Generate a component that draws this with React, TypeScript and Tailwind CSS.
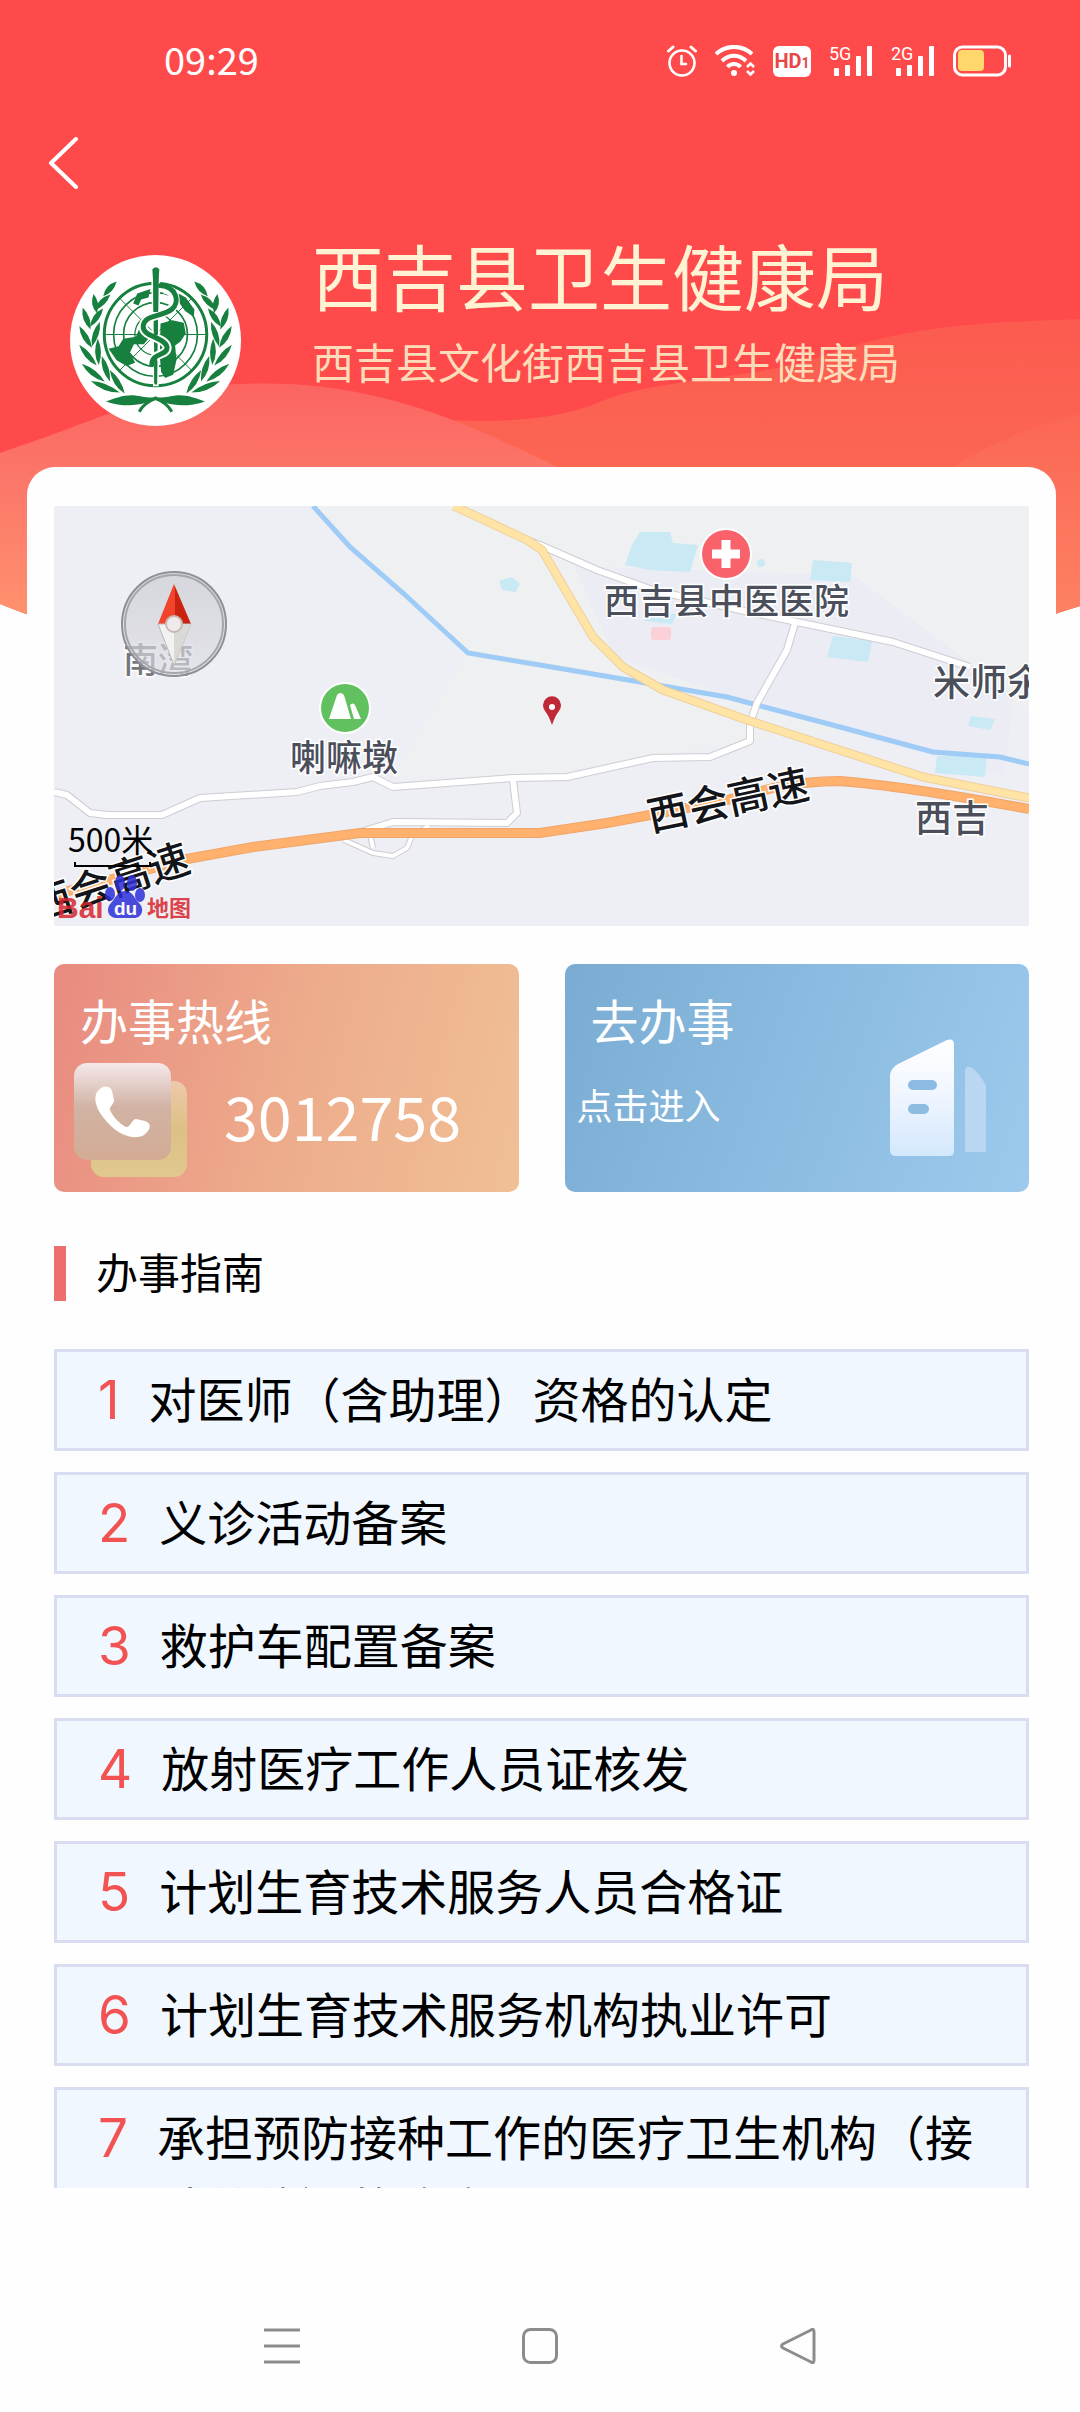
import React from 'react';

interface GuideItem {
  id: number;
  title: string;
}

const guideItems: GuideItem[] = [
  { id: 1, title: '对医师（含助理）资格的认定' },
  { id: 2, title: '义诊活动备案' },
  { id: 3, title: '救护车配置备案' },
  { id: 4, title: '放射医疗工作人员证核发' },
  { id: 5, title: '计划生育技术服务人员合格证' },
  { id: 6, title: '计划生育技术服务机构执业许可' },
  { id: 7, title: '承担预防接种工作的医疗卫生机构（接种单位）的确定' },
];

const HeaderBackground = () => (
  <svg
    className="absolute inset-x-0 top-0 w-full h-[660px]"
    viewBox="0 0 1080 660"
    preserveAspectRatio="none"
    aria-hidden="true"
  >
    <defs>
      <clipPath id="bowl">
        <path d="M0 0H1080V606Q1060 612 1040 619Q540 690 40 619Q20 612 0 604Z" />
      </clipPath>
      <linearGradient id="hillLeft" x1="0" y1="380" x2="0" y2="620" gradientUnits="userSpaceOnUse">
        <stop offset="0" stopColor="#fc6461" />
        <stop offset="0.4" stopColor="#fc7669" />
        <stop offset="1" stopColor="#ff926e" />
      </linearGradient>
      <linearGradient id="hillRight" x1="0" y1="320" x2="0" y2="620" gradientUnits="userSpaceOnUse">
        <stop offset="0" stopColor="#fc5b4f" />
        <stop offset="1" stopColor="#fb7156" />
      </linearGradient>
      <linearGradient id="hillFront" x1="0" y1="410" x2="0" y2="620" gradientUnits="userSpaceOnUse">
        <stop offset="0" stopColor="#fb6653" />
        <stop offset="1" stopColor="#fd8264" />
      </linearGradient>
    </defs>
    <g clipPath="url(#bowl)">
      <rect width="1080" height="660" fill="#ff4a4b" />
      <path d="M440 420C500 422 550 422 600 402C660 376 760 382 840 350C920 324 1000 322 1080 319V660H440Z" fill="url(#hillRight)" />
      <path d="M930 480C980 450 1020 428 1080 414V660H930Z" fill="url(#hillFront)" />
      <path d="M0 453C50 436 80 424 130 406C190 384 240 382 290 384C400 390 480 430 560 468L620 660H0Z" fill="url(#hillLeft)" />
    </g>
  </svg>
);

const AlarmIcon = () => (
  <svg className="w-[30px] h-[32px]" viewBox="0 0 30 32" fill="none" stroke="white" strokeWidth="2.6" strokeLinecap="round">
    <circle cx="15" cy="18" r="12.5" />
    <path d="M14.5 11V19H19" />
    <path d="M1.5 6L6 2M28.5 6L24 2" strokeWidth="3" />
  </svg>
);

const WifiIcon = () => (
  <svg className="w-[40px] h-[32px]" viewBox="0 0 40 32" fill="none" stroke="white" strokeWidth="4">
    <path d="M1 9C11 -0.5 27 -0.5 37 9" />
    <path d="M7 16C14 9 24 9 31 16" />
    <path d="M12.5 22C16 18 22 18 25.5 22" />
    <circle cx="19" cy="28" r="3" fill="white" stroke="none" />
    <path d="M32 22L35.500 18.500L39 22M32 26L35.500 29.500L39 26" strokeWidth="2.5" />
  </svg>
);

const SignalIcon = ({ label }: { label: string }) => (
  <svg className="w-[44px] h-[32px] overflow-visible" viewBox="0 0 44 32" fill="white">
    <text x="0" y="15" fontSize="18" fontFamily="Roboto, sans-serif">{label}</text>
    <rect x="5" y="23" width="5" height="8" rx="1" />
    <rect x="16" y="20" width="5" height="11" rx="1" />
    <rect x="27" y="11" width="5" height="20" rx="1" />
    <rect x="38" y="1" width="5" height="30" rx="1" />
  </svg>
);

const BatteryIcon = () => (
  <svg className="w-[59px] h-[32px]" viewBox="0 0 59 32" fill="none">
    <rect x="1.500" y="2" width="51" height="28" rx="8" stroke="white" strokeWidth="3" />
    <rect x="5" y="5" width="26" height="21" rx="4" fill="#ffd76b" />
    <path d="M56.500 11V21" stroke="white" strokeWidth="3" strokeLinecap="round" />
  </svg>
);

const StatusBar = () => (
  <div className="flex items-center justify-between h-[122px] pl-[164px] pr-[68px] text-white">
    <span className="pb-1 text-[38px] leading-[44px]">09:29</span>
    <div className="flex items-center gap-[18px]">
      <AlarmIcon />
      <WifiIcon />
      <span className="flex items-baseline justify-center w-[38px] h-[31px] rounded-[6px] bg-white text-[#e8474a] font-['Roboto'] font-bold text-[20px] leading-[31px]">
        HD<span className="text-[14px]">1</span>
      </span>
      <SignalIcon label="5G" />
      <SignalIcon label="2G" />
      <BatteryIcon />
    </div>
  </div>
);

// [x, y, angle, length] of every leaf on the left branch; the right one is its mirror
const leaves: [number, number, number, number][] = [
  [150, 146, -48, 60],
  [106, 190, -100, 58],
  [128, 186, -45, 66],
  [80, 235, -110, 70],
  [110, 232, -55, 68],
  [77, 290, -120, 76],
  [108, 282, -72, 78],
  [84, 345, -130, 82],
  [115, 335, -92, 80],
  [100, 398, -142, 88],
  [138, 386, -108, 80],
  [136, 440, -158, 94],
  [172, 425, -122, 84],
];

const Branch = () => (
  <g>
    {leaves.map(([x, y, angle, length]) => (
      <path
        key={`${x}-${y}`}
        transform={`translate(${x} ${y}) rotate(${angle})`}
        d={`M${-length / 2} 0Q0 -19 ${length / 2} 0Q0 16 ${-length / 2} 0Z`}
      />
    ))}
    <path d="M138 484C170 474 190 464 225 466C250 468 270 478 290 468C262 498 196 504 138 484Z" />
    <path d="M238 515C250 492 268 482 290 474" fill="none" stroke="#17803f" strokeWidth="9" />
  </g>
);

const HealthEmblem = () => (
  <svg className="w-full h-full" viewBox="30 44 514 514" fill="#17803f" role="img" aria-label="卫生健康局">
    <g fill="none" stroke="#17803f">
      <circle cx="287" cy="283" r="154" strokeWidth="9" />
      <circle cx="287" cy="283" r="126" strokeWidth="5" />
      <circle cx="287" cy="283" r="96" strokeWidth="5" />
      <circle cx="287" cy="283" r="62" strokeWidth="4" />
      <path d="M133 283H441M180 175L395 390M395 175L180 390" strokeWidth="3" />
    </g>
    <path d="M220 190L232 160L272 146L266 172L244 178L236 196Z" />
    <path d="M356 160L378 172L404 208L402 230L376 212L360 190Z" />
    <path d="M146 326L176 318L190 296L228 290L240 262L262 254L270 290L252 312L222 312L210 338L226 368L200 378L170 360Z" />
    <path d="M302 250L338 240L372 248L378 280L362 304L346 316L350 360L340 404L316 414L304 396L300 350Z" />
    <Branch />
    <g transform="translate(574 0) scale(-1 1)">
      <Branch />
    </g>
    <path d="M275 86Q288 70 301 86L299 120L294 436H282L277 120Z" stroke="white" strokeWidth="5" />
    <path d="M312 146C346 150 356 184 336 204C308 230 254 222 250 258C248 292 318 290 322 322C322 348 276 336 276 374" fill="none" stroke="white" strokeWidth="27" />
    <path d="M302 136C350 140 362 186 336 207C308 230 254 222 250 258C248 292 318 290 322 322C322 348 276 336 276 374" fill="none" stroke="#17803f" strokeWidth="15" strokeLinecap="round" />
    <path d="M281 100H295V215H281ZM282 250H294V285H282ZM283 345H292V430H283Z" />
  </svg>
);

const AgencyHeader = () => (
  <div className="flex items-start pt-[30px] pb-[41px] px-[70px] gap-[71px]">
    <div className="shrink-0 mt-[21px] w-[171px] h-[171px] rounded-full bg-white overflow-hidden">
      <HealthEmblem />
    </div>
    <div className="flex flex-col gap-[17px] whitespace-nowrap">
      <h1 className="text-[72px] leading-[80px] text-[#fff3d3]">西吉县卫生健康局</h1>
      <p className="text-[42px] leading-[60px] text-[#fddcb9]">西吉县文化街西吉县卫生健康局</p>
    </div>
  </div>
);

const AreaMap = () => (
  <svg
    className="block w-full h-[420px] bg-[#eeeff4]"
    viewBox="0 0 975 420"
    preserveAspectRatio="xMidYMid slice"
    fontFamily="'Noto Sans CJK SC', sans-serif"
  >
    <defs>
      <linearGradient id="needle" x1="0" x2="1">
        <stop offset="0.5" stopColor="#f0442c" />
        <stop offset="0.5" stopColor="#c9230f" />
      </linearGradient>
      <linearGradient id="dial" x1="0" x2="0" y1="0" y2="1">
        <stop offset="0" stopColor="#c9cad0" />
        <stop offset="1" stopColor="#dedee5" />
      </linearGradient>
    </defs>
    <path d="M259 0H975V200L696 235L459 272L340 270L414 147Z" fill="#eef0f1" />
    <path d="M520 60L800 70L960 190L950 270L700 200L560 150Z" fill="#ebecf4" />

    {/* built-up areas */}
    <g fill="#c9e9f5">
      <path d="M586 26H616L619 37L644 39L636 66L596 64L571 59L578 39Z" />
      <path d="M759 54L798 57L796 76L756 74Z" />
      <path d="M779 130L818 135L814 156L773 151Z" />
      <path d="M883 250H933L931 271L881 267Z" />
      <path d="M917 210L941 213L936 224L914 220Z" />
      <path d="M445 75L458 71L466 78L462 86L448 84Z" />
      <path d="M592 108L622 108L618 118L590 115Z" />
      <circle cx="707" cy="57" r="4" />
    </g>
    <rect x="597" y="121" width="20" height="13" rx="3" fill="#fbd0d9" />

    <path d="M259 0L296 41L349 87L414 147L486 159L586 176L673 191L786 221L879 246L946 251L975 258" fill="none" stroke="#9fcbf7" strokeWidth="5" />

    {/* minor roads: casing under the white line */}
    {[
      { color: '#cdcdd3', width: 8 },
      { color: '#ffffff', width: 6 },
    ].map((line) => (
      <g key={line.color} fill="none" stroke={line.color} strokeWidth={line.width} strokeLinejoin="round">
        <path d="M473 34L486 39L543 64L599 84L686 104L743 116L839 136L916 161" />
        <path d="M741 117L733 144L703 197L696 217V235L656 251L599 252L513 271L459 272L339 281L319 271L299 276L266 280L243 286L146 292L108 309L53 309L36 307L13 289L0 286" />
        <path d="M459 274L463 307L453 317L339 316L300 328" />
        <path d="M290 334L319 347L339 350L353 342L358 330L375 320M316 328L319 342" strokeWidth={line.width - 2} />
      </g>
    ))}

    <path d="M400 0L473 34L488 44L519 97L539 131L569 161L609 184L693 214L776 241L869 271L975 292" fill="none" stroke="#efcf9b" strokeWidth="9" strokeLinejoin="round" />
    <path d="M400 0L473 34L488 44L519 97L539 131L569 161L609 184L693 214L776 241L869 271L975 292" fill="none" stroke="#ffe4a5" strokeWidth="7" strokeLinejoin="round" />
    <path d="M0 389L133 353L199 341L306 327H486L553 317L596 309L673 294L719 282Q753 275 786 275Q850 280 975 303" fill="none" stroke="#f0a468" strokeWidth="10" />
    <path d="M0 389L133 353L199 341L306 327H486L553 317L596 309L673 294L719 282Q753 275 786 275Q850 280 975 303" fill="none" stroke="#ffb16d" strokeWidth="8" />

    {/* place names */}
    <g fill="#4b4f5c" stroke="white" strokeWidth="3" paintOrder="stroke" fontWeight="500">
      <text x="69" y="167" fontSize="35" fill="#75777f">南湾</text>
      <text x="236" y="265" fontSize="36">喇嘛墩</text>
      <text x="550" y="108" fontSize="35">西吉县中医医院</text>
      <text x="879" y="190" fontSize="37">米师氽</text>
      <text x="861" y="326" fontSize="37">西吉</text>
    </g>
    <g fill="#14151a" stroke="white" strokeWidth="3" paintOrder="stroke" fontWeight="500" fontSize="41" textAnchor="middle">
      <text transform="translate(674 294) rotate(-12)" y="15">西会高速</text>
      <text transform="translate(56 376) rotate(-18)" y="15">西会高速</text>
    </g>

    {/* compass */}
    <circle cx="120" cy="118" r="52" fill="url(#dial)" fillOpacity="0.65" stroke="#8f9096" strokeWidth="2" />
    <circle cx="120" cy="118" r="49" fill="none" stroke="#a5a6ab" strokeWidth="2" />
    <path d="M120 78L137 118H104Z" fill="url(#needle)" />
    <path d="M104 118H137L120 159Z" fill="#f2f2f0" stroke="#b9b9b9" />
    <path d="M120 118H137L120 159Z" fill="#d9d9d6" />
    <circle cx="120" cy="118" r="8" fill="#efebea" stroke="#c9b9b5" strokeWidth="2" />

    {/* park and hospital markers */}
    <circle cx="291" cy="202" r="26" fill="white" />
    <circle cx="291" cy="202" r="24" fill="#62c15f" />
    <path d="M275 213L283 189Q286 185 290 189L297 213Z" fill="white" />
    <path d="M296 199Q299 196 301 199L307 213H300Z" fill="white" />
    <circle cx="672" cy="48" r="26" fill="white" />
    <circle cx="672" cy="48" r="24" fill="#f9616b" />
    <path d="M672 34V62M658 48H686" stroke="white" strokeWidth="9" />

    <path d="M498 219Q495 210 491 205A9 9 0 1 1 505 205Q501 210 498 219Z" fill="#bf2836" />
    <circle cx="498" cy="201" r="3" fill="white" />

    {/* scale */}
    <text x="14" y="346" fontSize="32" fill="#000">500米</text>
    <path d="M21 356V360H96V356" fill="none" stroke="#000" strokeWidth="2" />

    {/* map provider mark */}
    <g opacity="0.85">
      <text x="3" y="412" fontSize="30" fontWeight="700" fontFamily="'Liberation Sans', Arial, sans-serif" fill="#d9252c">Bai</text>
      <g fill="#2d2fd8">
        <ellipse cx="56" cy="388" rx="5" ry="7" />
        <ellipse cx="66" cy="377" rx="5" ry="8" />
        <ellipse cx="78" cy="377" rx="5" ry="8" />
        <ellipse cx="86" cy="389" rx="5" ry="7" />
        <path d="M71 385C79 385 80 392 85 397C91 403 88 412 80 412H63C53 412 52 402 57 397C62 392 63 385 71 385Z" />
      </g>
      <text x="60" y="409" fontSize="19" fontWeight="700" fontFamily="'Liberation Sans', Arial, sans-serif" fill="white">du</text>
      <text x="93" y="410" fontSize="22" fontWeight="700" fill="#d9252c">地图</text>
    </g>
  </svg>
);

const PhoneTile = () => (
  <svg className="w-[114px] h-[114px]" viewBox="0 0 114 114" aria-hidden="true">
    <defs>
      <linearGradient id="tileBack" x1="0" x2="0" y1="0" y2="1">
        <stop offset="0" stopColor="#efc9ac" />
        <stop offset="0.500" stopColor="#dcc185" />
        <stop offset="1" stopColor="#e0c88e" />
      </linearGradient>
      <linearGradient id="tileFront" x1="0" x2="0" y1="0" y2="1">
        <stop offset="0" stopColor="#f5e9ea" />
        <stop offset="0.450" stopColor="#d1b3a4" />
        <stop offset="1" stopColor="#d3ab94" />
      </linearGradient>
    </defs>
    <rect x="17" y="18" width="96" height="96" rx="13" fill="url(#tileBack)" />
    <rect width="97" height="97" rx="13" fill="url(#tileFront)" />
    <path d="M22 31C26 22 36 21 38 28L40 37C40 42 35 43 36 47C39 54 45 60 52 64C56 65 57 57 62 56L71 58C79 61 76 67 70 72C62 77 47 73 37 63C26 52 19 41 22 31Z" fill="white" />
  </svg>
);

const BuildingIcon = () => (
  <svg className="w-[97px] h-[118px]" viewBox="0 0 97 118" aria-hidden="true">
    <defs>
      <linearGradient id="tower" x1="0" x2="0" y1="0" y2="1">
        <stop offset="0" stopColor="#ffffff" />
        <stop offset="0.450" stopColor="#f1f6ff" />
        <stop offset="1" stopColor="#d3e8fd" />
      </linearGradient>
    </defs>
    <path d="M0 36Q1 29 8 25L57 1Q64 -1 64 6V112Q64 117 59 117H6Q0 117 0 111Z" fill="url(#tower)" />
    <rect x="18" y="41" width="29" height="10" rx="5" fill="#8dbbe2" />
    <rect x="18" y="65" width="21" height="10" rx="5" fill="#8dbbe2" />
    <path d="M75 113V33Q75 27 80 28Q86 30 96 46V113Z" fill="#b9d6f2" />
  </svg>
);

const NavButton = ({ label, children }: { label: string; children: React.ReactNode }) => (
  <button type="button" aria-label={label} className="flex-1 flex justify-center">
    <svg className="w-[36px] h-[36px]" viewBox="0 0 36 36" fill="none" stroke="#8c8c8c" strokeWidth="3" strokeLinejoin="round">
      {children}
    </svg>
  </button>
);

const App: React.FC = () => {
  return (
    <div className="relative flex flex-col h-screen overflow-hidden bg-[#fefefe] font-['Noto_Sans_CJK_SC',sans-serif] text-black">
      <HeaderBackground />

      <header className="relative">
        <StatusBar />
        <div className="flex items-center h-[82px] pl-[47px]">
          <button type="button" aria-label="返回">
            <svg className="w-[32px] h-[52px]" viewBox="0 0 32 52" fill="none" stroke="white" strokeWidth="4" strokeLinecap="round" strokeLinejoin="round">
              <path d="M29 2L4 26L29 50" />
            </svg>
          </button>
        </div>
        <AgencyHeader />
      </header>

      <main className="relative flex-1 min-h-0 flex flex-col ml-[27px] mr-[24px] px-[27px] pt-[39px] rounded-t-[28px] bg-[#fefefe]">
        <div className="shrink-0">
          <AreaMap />
        </div>

        {/* Shortcuts */}
        <div className="shrink-0 grid grid-cols-2 gap-[46px] mt-[38px] text-white">
          <a href="tel:3012758" className="block h-[228px] rounded-[10px] bg-linear-[105deg] from-[#e98a80] via-[#edab8b] to-[#f0c095] pt-[22px] px-[20px]">
            <h2 className="pl-[6px] text-[48px] leading-[66px]">办事热线</h2>
            <div className="flex items-center gap-[36px] mt-[11px]">
              <PhoneTile />
              <span className="pb-[10px] text-[61px] leading-[72px]">3012758</span>
            </div>
          </a>
          <a href="#services" className="flex items-center justify-between h-[228px] rounded-[10px] bg-linear-[110deg] from-[#7aacd3] to-[#9ccaed] pl-[12px] pr-[42px]">
            <div className="flex flex-col gap-[25px] self-start pt-[22px]">
              <h2 className="pl-[14px] text-[48px] leading-[66px]">去办事</h2>
              <p className="text-[36px] leading-[54px]">点击进入</p>
            </div>
            <div className="mt-[40px]">
              <BuildingIcon />
            </div>
          </a>
        </div>

        <div className="shrink-0 flex items-start gap-[30px] mt-[54px]">
          <span className="w-[12px] h-[55px] bg-[#ed6e6e]"></span>
          <h2 className="text-[42px] leading-[50px]">办事指南</h2>
        </div>

        {/* Guide list, scrolls inside the remaining height */}
        <ul className="flex-1 min-h-0 mt-[48px] flex flex-col gap-[21px] overflow-y-auto [scrollbar-width:none]">
          {guideItems.map((item) => (
            <li key={item.id} className="shrink-0">
              <a
                href={`#guide-${item.id}`}
                className="flex items-start gap-[29px] border-3 border-[#dadcf2] bg-[#f0f7fe] py-[9px] px-[41px]"
              >
                <span className="font-['Inter'] text-[53px] leading-[78px] text-[#f25252]">{item.id}</span>
                <span className="text-[48px] leading-[72px]">{item.title}</span>
              </a>
            </li>
          ))}
        </ul>
      </main>

      <nav className="relative shrink-0 flex items-end h-[224px] px-[153px] pb-[48px]">
        <NavButton label="最近任务">
          <path d="M0 2H36M0 18H36M0 34H36" />
        </NavButton>
        <NavButton label="主屏幕">
          <rect x="1.500" y="1.500" width="33" height="33" rx="7" />
        </NavButton>
        <NavButton label="返回上一页">
          <path d="M31 2Q34 0 34 4V32Q34 36 31 34L3 20Q0 18 3 16Z" />
        </NavButton>
      </nav>
    </div>
  );
};

export default App;
